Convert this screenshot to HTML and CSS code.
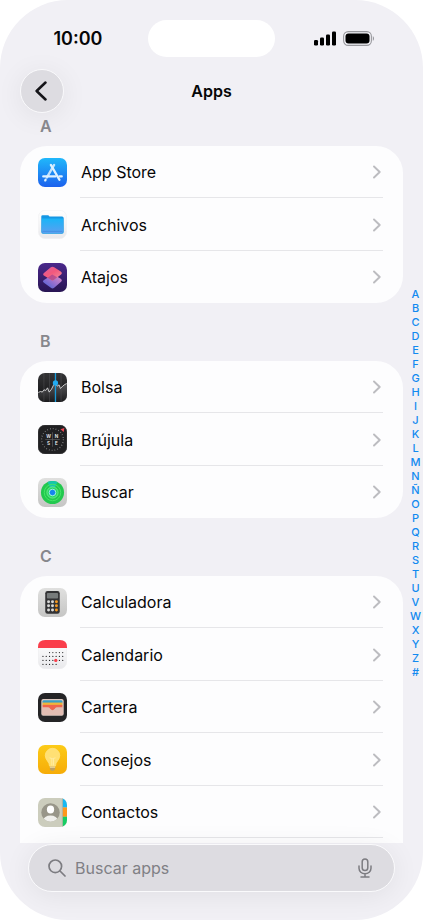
FILE: index.html
```html
<!DOCTYPE html>
<html lang="es">
<head>
<meta charset="utf-8">
<meta name="viewport" content="width=device-width, initial-scale=1">
<title>Apps</title>
<link rel="stylesheet" href="styles.css">
</head>
<body>
<svg class="defs" aria-hidden="true">
  <symbol id="chevron" viewBox="0 0 8 14"><path d="M1 1.500 6.700 7 1 12.500" fill="none" stroke="#bcbcc0" stroke-width="1.900" stroke-linecap="round" stroke-linejoin="round"/></symbol>
</svg>
<div class="device">
  <div class="status">
    <span class="time">10:00</span>
    <span class="island"></span>
    <span class="signals">
      <svg class="bars" viewBox="0 0 23 15" aria-label="Cobertura"><rect x="0" y="9" width="4" height="5.500" rx="1.200"/><rect x="6" y="6.500" width="4" height="8" rx="1.200"/><rect x="12" y="3.500" width="4" height="11" rx="1.200"/><rect x="18" y="0.500" width="4" height="14" rx="1.200"/></svg>
      <svg class="battery" viewBox="0 0 32 15" aria-label="Batería"><rect x=".6" y=".6" width="27.800" height="13.800" rx="4.600" fill="none" stroke="#99999e" stroke-width="1.100"/><rect x="2.500" y="2.500" width="24" height="10" rx="3"/><path d="M29.800 5.200c1.600.5 1.600 4.100 0 4.600z" fill="#99999e"/></svg>
    </span>
  </div>
  <header class="nav">
    <button class="back" type="button" aria-label="Atrás"><svg viewBox="0 0 12 20"><path d="M10.500 1.500 1.600 10l8.900 8.500" fill="none" stroke="#151519" stroke-width="2.500" stroke-linecap="round" stroke-linejoin="round"/></svg></button>
    <h1>Apps</h1>
  </header>
  <div class="content">
    <main class="sections">
      <section>
        <h2>A</h2>
        <div class="card">
          <a class="row" href="#"><svg class="icon" viewBox="0 0 88 88"><defs><linearGradient id="store" x2="0" y2="1"><stop stop-color="#20b8fb"/><stop offset="1" stop-color="#1c61ed"/></linearGradient></defs><rect width="88" height="88" rx="21" fill="url(#store)"/><g stroke="#dff1ff" stroke-width="7" stroke-linecap="round" fill="none"><path d="M39 21 65 66"/><path d="M49 21 27 59" opacity=".85"/><path d="M16 56H53M65 56h7" /><path d="M23 66l-1 2" /></g></svg><span>App Store</span><svg class="chev"><use href="#chevron"/></svg></a>
          <a class="row" href="#"><svg class="icon" viewBox="0 0 88 88"><defs><linearGradient id="paper" x2="0" y2="1"><stop stop-color="#fff"/><stop offset="1" stop-color="#e9e9ec"/></linearGradient><linearGradient id="folder" x2="0" y2="1"><stop stop-color="#19b5f8"/><stop offset="1" stop-color="#5b9ff0"/></linearGradient></defs><rect x="1" y="1" width="86" height="86" rx="21" fill="url(#paper)" stroke="#f1f1f3" stroke-width="2"/><path d="M10 20q0-4 4-4h16q3 0 4 3l1 1h38q5 0 5 5v42q0 5-5 5H15q-5 0-5-5z" fill="#1597e4"/><path d="M12 26h64v40q0 4-4 4H16q-4 0-4-4z" fill="url(#folder)"/><path d="M14 65h60" stroke="#3d8ade" stroke-width="2"/></svg><span>Archivos</span><svg class="chev"><use href="#chevron"/></svg></a>
          <a class="row" href="#"><svg class="icon" viewBox="0 0 88 88"><defs><linearGradient id="night" x2="0" y2="1"><stop stop-color="#4a288b"/><stop offset="1" stop-color="#281553"/></linearGradient><linearGradient id="pink" x1="0" x2=".8" y2="1"><stop stop-color="#d75fa8"/><stop offset=".5" stop-color="#f3587c"/><stop offset="1" stop-color="#f08b9c"/></linearGradient><linearGradient id="violet" x1="1" x2="0" y2="1"><stop stop-color="#e88fc0"/><stop offset=".5" stop-color="#9a70d0"/><stop offset="1" stop-color="#3f62d4"/></linearGradient></defs><rect width="88" height="88" rx="21" fill="url(#night)"/><path d="M46 34 69 48q6 4 1 9L49 75q-5 4-10 0L18 60q-6-4-1-8z" fill="url(#violet)"/><path d="M39 13q5-4 10 0l20 13q6 4 1 9L49 51q-5 4-10 0L19 39q-6-5-1-9z" fill="url(#pink)"/><path d="M43 35 29 45l10 6q5 4 10 0l9-8z" fill="#a8448f" opacity=".75"/></svg><span>Atajos</span><svg class="chev"><use href="#chevron"/></svg></a>
        </div>
      </section>
      <section>
        <h2>B</h2>
        <div class="card">
          <a class="row" href="#"><svg class="icon" viewBox="0 0 88 88"><defs><linearGradient id="coal" x2="0" y2="1"><stop stop-color="#343436"/><stop offset="1" stop-color="#111113"/></linearGradient><linearGradient id="area" x2="0" y2="1"><stop stop-color="#77777b"/><stop offset="1" stop-color="#222224"/></linearGradient></defs><rect width="88" height="88" rx="21" fill="url(#coal)"/><path d="M0 59 8 56 13 58 18 51 23 53 29 45 34 58 41 49 47 37 53 30 58 40 64 36 68 47 75 40 81 35 88 32V66q0 22-22 22H22Q0 88 0 66z" fill="url(#area)" opacity=".6"/><path d="M18 2v84M35 0v88M70 2v84" stroke="#555559" stroke-width="1.500"/><path d="M1 59 8 56 13 58 18 51 23 53 29 45 34 58 41 49 47 37 53 30 58 40 64 36 68 47 75 40 81 35 87 32" fill="none" stroke="#e9e9ea" stroke-width="2.500" stroke-linejoin="round"/><path d="M53 0v88" stroke="#189ad8" stroke-width="4"/><circle cx="53" cy="30" r="8" fill="#22aaf0"/></svg><span>Bolsa</span><svg class="chev"><use href="#chevron"/></svg></a>
          <a class="row" href="#"><svg class="icon" viewBox="0 0 88 88"><rect width="88" height="88" rx="21" fill="#202022"/><rect x="1" y="1" width="86" height="86" rx="20" fill="none" stroke="#3b3b3d" stroke-width="2"/><circle cx="44" cy="44" r="33" fill="none" stroke="#929294" stroke-width="4" stroke-dasharray="2 6.640"/><path d="M44 22v44M22 44h44" stroke="#626265" stroke-width="2"/><path d="m68 13 12-4-2 12z" fill="#ef4653"/><g class="compass"><text x="32" y="38">W</text><text x="56" y="38">N</text><text x="32" y="61">S</text><text x="56" y="61">E</text></g></svg><span>Brújula</span><svg class="chev"><use href="#chevron"/></svg></a>
          <a class="row" href="#"><svg class="icon" viewBox="0 0 88 88"><defs><linearGradient id="silver" x2="0" y2="1"><stop stop-color="#e0e0df"/><stop offset="1" stop-color="#c5c5c4"/></linearGradient></defs><rect width="88" height="88" rx="21" fill="url(#silver)"/><circle cx="44" cy="44" r="35" fill="#22c84e"/><path d="M44 44 29 12q15-6 30 0z" fill="#16c6ab"/><circle cx="44" cy="44" r="25" fill="none" stroke="#44e566" stroke-width="3"/><circle cx="44" cy="44" r="17" fill="#2bd86a" stroke="#8af69a" stroke-width="2"/><circle cx="44" cy="44" r="10" fill="#1686ee" stroke="#9cf2dc" stroke-width="3"/></svg><span>Buscar</span><svg class="chev"><use href="#chevron"/></svg></a>
        </div>
      </section>
      <section>
        <h2>C</h2>
        <div class="card">
          <a class="row" href="#"><svg class="icon" viewBox="0 0 88 88"><rect width="88" height="88" rx="21" fill="url(#silver)"/><rect x="22" y="9" width="44" height="69" rx="7" fill="#323234"/><rect x="27" y="15" width="34" height="17" rx="3" fill="#777b7b"/><g fill="#d9d9d7"><circle cx="32" cy="42" r="4.500"/><circle cx="44" cy="42" r="4.500"/><circle cx="32" cy="54" r="4.500"/><circle cx="44" cy="54" r="4.500"/><circle cx="32" cy="67" r="4.500"/><circle cx="44" cy="67" r="4.500"/></g><g fill="#f69a22"><circle cx="56" cy="42" r="4.500"/><circle cx="56" cy="54" r="4.500"/><circle cx="56" cy="67" r="4.500"/></g></svg><span>Calculadora</span><svg class="chev"><use href="#chevron"/></svg></a>
          <a class="row" href="#"><svg class="icon" viewBox="0 0 88 88"><rect x="1" y="1" width="86" height="86" rx="21" fill="url(#paper)" stroke="#ececee" stroke-width="2"/><path d="M0 24v-3Q0 0 22 0h44q22 0 22 21v3z" fill="#fa3e4b"/><g fill="none" stroke="#29292b" stroke-width="3.800" stroke-linecap="round" stroke-dasharray="0 10"><path d="M35 38h41M15 50h61M15 62h61M15 74h42"/></g><circle cx="54" cy="62" r="5" fill="#fa3e4b"/></svg><span>Calendario</span><svg class="chev"><use href="#chevron"/></svg></a>
          <a class="row" href="#"><svg class="icon" viewBox="0 0 88 88"><rect width="88" height="88" rx="21" fill="#242426"/><rect x="10" y="18" width="68" height="51" rx="6" fill="#dcc8c0"/><path d="M14 25q0-3 4-3h52q4 0 4 3v6H14z" fill="#399fc5"/><path d="M14 29h60v9H14z" fill="#f1b43a"/><path d="M14 36h60v12H14z" fill="#ef654d"/><path d="M12 43h19q4 0 6 4 7 10 14 0 2-4 6-4h19v20q0 4-4 4H16q-4 0-4-4z" fill="#e2bdb3"/><path d="M31 43q4 0 6 4 7 10 14 0 2-4 6-4z" fill="#ef654d"/></svg><span>Cartera</span><svg class="chev"><use href="#chevron"/></svg></a>
          <a class="row" href="#"><svg class="icon" viewBox="0 0 88 88"><defs><linearGradient id="gold" x2="0" y2="1"><stop stop-color="#fccb18"/><stop offset="1" stop-color="#f6ac08"/></linearGradient></defs><rect width="88" height="88" rx="21" fill="url(#gold)"/><path d="M35 64c0-13-13-18-13-32a22 22 0 0 1 44 0c0 14-13 19-13 32z" fill="#ffe074" stroke="#ffe78c" stroke-width="2"/><path d="M35 39q9 5 18 0M42 42v20M47 42v20" fill="none" stroke="#fff1b8" stroke-width="2"/><path d="M36 65h16v8l-4 5h-8l-4-5z" fill="#bda064"/><path d="M36 67h16" stroke="#fff0b0" stroke-width="3"/></svg><span>Consejos</span><svg class="chev"><use href="#chevron"/></svg></a>
          <a class="row" href="#"><svg class="icon" viewBox="0 0 88 88"><defs><clipPath id="tile"><rect width="88" height="88" rx="21"/></clipPath><clipPath id="portrait"><circle cx="38" cy="44" r="28"/></clipPath></defs><g clip-path="url(#tile)"><path d="M0 0h88v88H0z" fill="#cccdbd"/><path d="M75 0h13v29H75z" fill="#16b8f3"/><path d="M75 29h13v28H75z" fill="#ff971c"/><path d="M75 57h13v31H75z" fill="#16cd63"/><path d="M74 0v88" stroke="#aaa99a" stroke-width="2"/><circle cx="38" cy="44" r="28" fill="#989689"/><g fill="#fff" clip-path="url(#portrait)"><ellipse cx="38" cy="35" rx="11" ry="12"/><ellipse cx="38" cy="68" rx="22" ry="15" fill="#efefeb"/></g></g></svg><span>Contactos</span><svg class="chev"><use href="#chevron"/></svg></a>
          <a class="row" href="#" aria-label="Más apps"></a>
        </div>
      </section>
    </main>
    <nav class="index" aria-label="Índice">
      <a href="#">A</a><a href="#">B</a><a href="#">C</a><a href="#">D</a><a href="#">E</a><a href="#">F</a><a href="#">G</a><a href="#">H</a><a href="#">I</a><a href="#">J</a><a href="#">K</a><a href="#">L</a><a href="#">M</a><a href="#">N</a><a href="#">Ñ</a><a href="#">O</a><a href="#">P</a><a href="#">Q</a><a href="#">R</a><a href="#">S</a><a href="#">T</a><a href="#">U</a><a href="#">V</a><a href="#">W</a><a href="#">X</a><a href="#">Y</a><a href="#">Z</a><a href="#">#</a>
    </nav>
  </div>
  <footer class="bottom">
    <div class="search">
      <label for="q" aria-label="Buscar apps"><svg class="lens" viewBox="0 0 18 18"><circle cx="7.300" cy="7.300" r="6.300"/><path d="m12 12 5 5"/></svg></label>
      <input id="q" type="text" placeholder="Buscar apps">
      <button type="button" aria-label="Dictar"><svg class="mic" viewBox="0 0 14 20"><rect x="4.200" y="1" width="5.600" height="11.500" rx="2.800"/><path d="M1 8v2.300a6 5.500 0 0 0 12 0V8M7 16v3M3 19h8"/></svg></button>
    </div>
  </footer>
</div>
</body>
</html>
```

FILE: styles.css
```css
* { box-sizing: border-box; }

body {
  margin: 0;
  background: #fff;
  color: #060607;
  font-family: Inter, "Liberation Sans", sans-serif;
  font-size: 16px;
}

a { color: inherit; text-decoration: none; }

button {
  padding: 0;
  border: 0;
  background: none;
  cursor: pointer;
}

svg { display: block; flex: none; }

.defs { position: absolute; width: 0; height: 0; }

.device {
  display: flex;
  flex-direction: column;
  height: 100vh;
  overflow: hidden;
  border-radius: 68px;
  background: #f1f0f5;
}

.status {
  display: grid;
  grid-template-columns: 1fr 127px 1fr;
  align-items: center;
  flex: none;
  height: 57px;
  padding-top: 20px;
}

.time {
  padding-left: 8px;
  font-size: 18px;
  font-weight: 600;
  text-align: center;
}

.island {
  height: 37px;
  border-radius: 19px;
  background: #fff;
}

.signals {
  display: flex;
  justify-content: center;
  gap: 6px;
  padding-right: 10px;
}

.bars { width: 23px; height: 15px; }
.battery { width: 32px; height: 15px; }

.nav {
  display: grid;
  grid-template-columns: 44px 1fr 44px;
  align-items: center;
  flex: none;
  padding: 12px 20px 0;
}

.nav h1 {
  margin: 0;
  font-size: 16px;
  font-weight: 600;
  text-align: center;
}

.back {
  display: grid;
  place-items: center;
  width: 44px;
  height: 44px;
  padding-right: 3px;
  border: 1px solid #fafafc;
  border-radius: 50%;
  background: #dddce1;
  box-shadow: 0 4px 28px rgb(0 0 0 / 7%);
}

.back svg { width: 12px; height: 20px; }

.content {
  display: flex;
  flex: 1;
  min-height: 0;
  overflow: hidden;
}

.sections {
  flex: 1;
  padding-left: 20px;
}

h2 {
  margin: 0;
  padding: 0 20px;
  color: #87878c;
  font-size: 16px;
  font-weight: 600;
  line-height: 26px;
}

section + section h2 { padding-top: 25px; }

.card {
  margin-top: 7px;
  border-radius: 27px;
  background: #fdfdfe;
}

.row {
  display: grid;
  grid-template-columns: 29px 1fr 8px;
  align-items: center;
  column-gap: 14px;
  height: 52px;
  margin: 0 20px 0 18px;
  padding-right: 2px;
}

.row:nth-child(even) { height: 53px; }

.row:not(:last-child) {
  background: linear-gradient(#e6e6e9, #e6e6e9) 42px 100% / 100% 1px no-repeat;
}

.icon { width: 29px; height: 29px; }
.chev { width: 8px; height: 14px; }

.compass {
  fill: #f1f1f2;
  font-size: 14px;
  font-weight: 600;
  text-anchor: middle;
}

.index {
  display: flex;
  flex-direction: column;
  justify-content: center;
  width: 20px;
  padding: 10px 0 0 5px;
  color: #128af0;
  font-size: 11px;
  font-weight: 500;
  line-height: 14px;
}

.index a { display: flex; justify-content: center; }

.bottom {
  flex: none;
  padding: 1px 28px 28px;
}

.search {
  display: flex;
  align-items: center;
  gap: 9px;
  height: 48px;
  padding: 0 22px 0 19px;
  border: 1px solid #fafafc;
  border-radius: 24px;
  background: #dddce1;
  box-shadow: 0 4px 28px rgb(0 0 0 / 7%);
}

.search svg {
  fill: none;
  stroke: #7c7c81;
  stroke-linecap: round;
}

.lens { width: 18px; height: 18px; stroke-width: 1.700; }
.mic { width: 14px; height: 20px; stroke-width: 1.500; }

.search input {
  flex: 1;
  min-width: 0;
  padding: 0;
  border: 0;
  outline: 0;
  background: none;
  color: #060607;
  font: inherit;
}

.search input::placeholder { color: #808085; opacity: 1; }
```
